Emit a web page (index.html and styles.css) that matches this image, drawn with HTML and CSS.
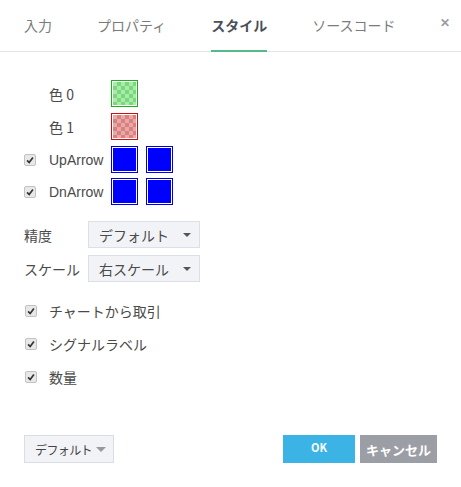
FILE: index.html
```html
<!DOCTYPE html>
<html lang="ja">

<head>
    <meta charset="UTF-8">
    <title>スタイル</title>
    <link rel="stylesheet" href="styles.css">
</head>

<body>
    <div class="dialog">
        <!-- タブ -->
        <div class="tabs">
            <span class="tab">入力</span>
            <span class="tab">プロパティ</span>
            <span class="tab active">スタイル</span>
            <span class="tab">ソースコード</span>
            <span class="close">&#x2715;</span>
        </div>

        <div class="content">
            <div class="color-rows">
                <div class="row">
                    <span class="check-slot"></span>
                    <span class="label">色 0</span>
                    <span class="swatch green"><span class="fill"></span></span>
                </div>
                <div class="row">
                    <span class="check-slot"></span>
                    <span class="label">色 1</span>
                    <span class="swatch red"><span class="fill"></span></span>
                </div>
                <div class="row">
                    <span class="check-slot"><span class="checkbox"><svg viewBox="0 0 12 12"><path d="M2.5 6.5 L5 9 L9.5 3" /></svg></span></span>
                    <span class="label latin">UpArrow</span>
                    <span class="swatch blue"><span class="fill"></span></span>
                    <span class="swatch blue"><span class="fill"></span></span>
                </div>
                <div class="row">
                    <span class="check-slot"><span class="checkbox"><svg viewBox="0 0 12 12"><path d="M2.5 6.5 L5 9 L9.5 3" /></svg></span></span>
                    <span class="label latin">DnArrow</span>
                    <span class="swatch blue"><span class="fill"></span></span>
                    <span class="swatch blue"><span class="fill"></span></span>
                </div>
            </div>

            <div class="select-rows">
                <div class="select-row">
                    <span class="select-label">精度</span>
                    <span class="select">デフォルト<span class="caret"></span></span>
                </div>
                <div class="select-row">
                    <span class="select-label">スケール</span>
                    <span class="select">右スケール<span class="caret"></span></span>
                </div>
            </div>

            <div class="check-rows">
                <div class="check-row">
                    <span class="checkbox"><svg viewBox="0 0 12 12"><path d="M2.5 6.5 L5 9 L9.5 3" /></svg></span>
                    <span>チャートから取引</span>
                </div>
                <div class="check-row">
                    <span class="checkbox"><svg viewBox="0 0 12 12"><path d="M2.5 6.5 L5 9 L9.5 3" /></svg></span>
                    <span>シグナルラベル</span>
                </div>
                <div class="check-row">
                    <span class="checkbox"><svg viewBox="0 0 12 12"><path d="M2.5 6.5 L5 9 L9.5 3" /></svg></span>
                    <span>数量</span>
                </div>
            </div>
        </div>

        <div class="footer">
            <span class="default-button">デフォルト<span class="caret"></span></span>
            <div class="actions">
                <button class="ok-button">OK</button>
                <button class="cancel-button">キャンセル</button>
            </div>
        </div>
    </div>
</body>

</html>
```

FILE: styles.css
```css
body {
    margin: 0;
    background-color: white;
    font-family: "Noto Sans CJK JP", "Liberation Sans", sans-serif;
    color: #4a4a4a;
}

.dialog {
    width: 461px;
    height: 487px;
    position: relative;
    white-space: nowrap;
}

.tabs {
    height: 51px;
    display: flex;
    align-items: flex-start;
    padding-left: 24px;
    border-bottom: 1px solid #e0e3e8;
    font-size: 14px;
}

.tab {
    flex-shrink: 0;
    margin-right: 45px;
    height: 51px;
    line-height: 50px;
    color: #7b7b7b;
    box-sizing: border-box;
}

.tab.active {
    color: #4b4f58;
    font-weight: bold;
    border-bottom: 2px solid #56b98a;
    height: 52px;
}

.close {
    margin-left: auto;
    margin-right: 20px;
    margin-top: 16px;
    color: #9a9ca2;
    font-size: 12px;
    font-weight: bold;
    line-height: 1;
}

.content {
    padding: 28px 24px 0;
}

.row {
    display: flex;
    align-items: center;
    height: 27px;
    margin-bottom: 6px;
    font-size: 14px;
}

.row:nth-child(3) {
    margin-bottom: 5px;
}

.check-slot {
    width: 25px;
    flex-shrink: 0;
    display: flex;
}

.label {
    width: 62px;
    flex-shrink: 0;
}

.label.latin {
    font-family: "Liberation Sans", "Noto Sans CJK JP", sans-serif;
}

.swatch {
    flex-shrink: 0;
    width: 27px;
    height: 27px;
    box-sizing: border-box;
    border: 1px solid;
    padding: 1px;
    background-color: white;
    margin-right: 8px;
}

.swatch .fill {
    display: block;
    width: 100%;
    height: 100%;
}

.swatch.green {
    border-color: #1db01d;
}

.swatch.green .fill {
    background-color: #a5eea5;
    background-image:
        linear-gradient(45deg, #7fd47f 25%, transparent 25%, transparent 75%, #7fd47f 75%),
        linear-gradient(45deg, #7fd47f 25%, transparent 25%, transparent 75%, #7fd47f 75%);
    background-size: 8px 8px;
    background-position: 0 0, 4px 4px;
}

.swatch.red {
    border-color: #cc1010;
}

.swatch.red .fill {
    background-color: #eea5a5;
    background-image:
        linear-gradient(45deg, #d48383 25%, transparent 25%, transparent 75%, #d48383 75%),
        linear-gradient(45deg, #d48383 25%, transparent 25%, transparent 75%, #d48383 75%);
    background-size: 8px 8px;
    background-position: 0 0, 4px 4px;
}

.swatch.blue {
    border-color: #0000d8;
}

.swatch.blue .fill {
    background-color: #0000ff;
}

.checkbox {
    flex-shrink: 0;
    width: 12px;
    height: 12px;
    box-sizing: border-box;
    border: 1px solid #c2c2c2;
    border-radius: 2px;
    background-color: #e8e8e8;
    display: inline-flex;
}

.checkbox svg {
    width: 10px;
    height: 10px;
    fill: none;
    stroke: #333;
    stroke-width: 2;
}

.select-rows {
    margin-top: 16px;
}

.select-row {
    display: flex;
    align-items: center;
    margin-bottom: 7px;
    font-size: 14px;
}

.select-label {
    width: 64px;
    flex-shrink: 0;
}

.select {
    flex-shrink: 0;
    width: 112px;
    height: 27px;
    box-sizing: border-box;
    border: 1px solid #dcdfe5;
    background-color: #f2f3f6;
    display: flex;
    align-items: center;
    padding-left: 10px;
}

.caret {
    width: 0;
    height: 0;
    border-left: 4px solid transparent;
    border-right: 4px solid transparent;
    border-top: 4px solid #555;
    margin-left: auto;
    margin-right: 8px;
}

.check-rows {
    margin-top: 16px;
}

.check-row {
    display: flex;
    align-items: center;
    height: 26px;
    margin-bottom: 7px;
    font-size: 14px;
}

.check-row .checkbox {
    margin-left: 1px;
    margin-right: 12px;
}

.footer {
    position: absolute;
    left: 24px;
    right: 24px;
    top: 435px;
    display: flex;
    justify-content: space-between;
}

.default-button {
    width: 90px;
    height: 28px;
    box-sizing: border-box;
    border: 1px solid #dadde3;
    background-color: #f2f3f6;
    display: flex;
    align-items: center;
    padding-left: 10px;
    font-size: 12px;
    letter-spacing: -0.6px;
    color: #444;
}

.default-button .caret {
    border-top-color: #999;
    border-left-width: 5px;
    border-right-width: 5px;
    border-top-width: 5px;
    margin-right: 7px;
}

.actions {
    display: flex;
    gap: 5px;
}

.actions button {
    height: 28px;
    border: none;
    color: white;
    font-family: "Noto Sans CJK JP", "Liberation Sans", sans-serif;
    font-weight: bold;
    padding: 0;
}

.ok-button {
    width: 72px;
    background-color: #3bb3e4;
    font-size: 11px;
    padding-bottom: 4px !important;
}

.cancel-button {
    width: 77px;
    background-color: #9c9ea6;
    font-size: 13px;
}
```
